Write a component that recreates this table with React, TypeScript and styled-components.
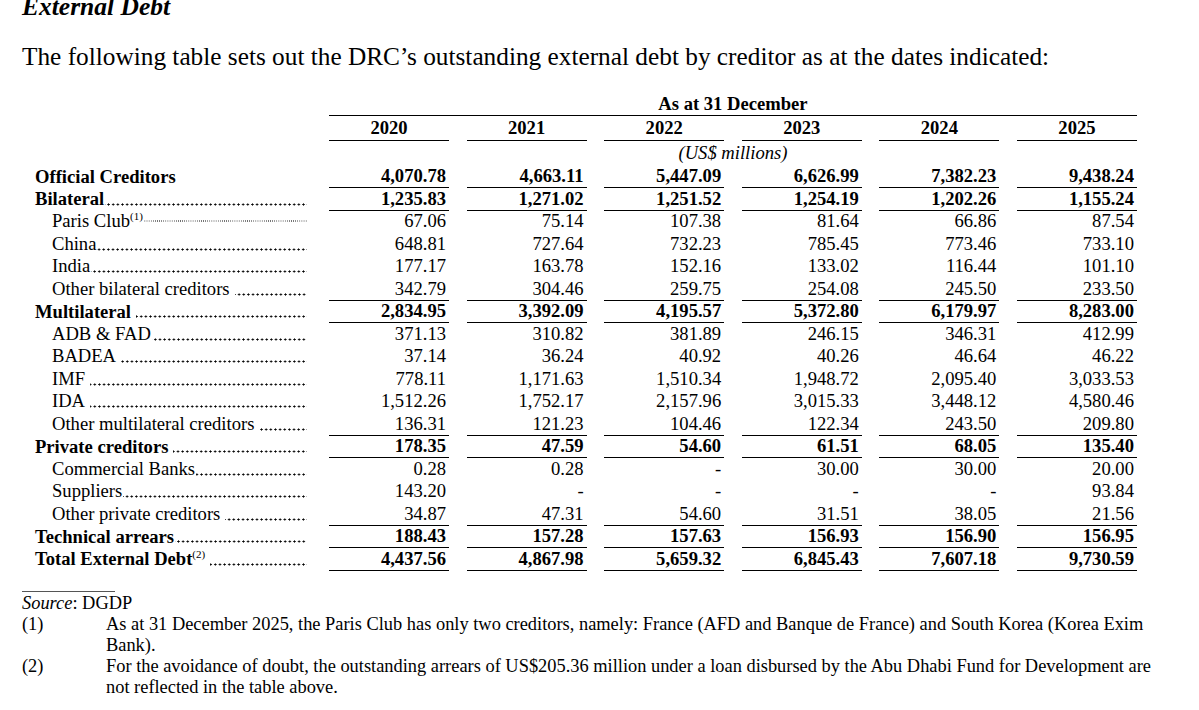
import React from 'react'
import styled, { createGlobalStyle } from 'styled-components'

const GlobalStyle = createGlobalStyle`
  html, body {
    margin: 0;
    padding: 0;
    background: #fff;
  }
  body {
    font-family: 'Liberation Serif', 'Times New Roman', serif;
    color: #000;
    overflow: hidden;
  }
`

type RowKind = 'top' | 'group' | 'item'

interface DebtRow {
  label: string
  kind: RowKind
  values: string[]
  note?: string
  ruled?: boolean
  gap?: boolean
  fineDots?: boolean
}

const YEARS = ['2020', '2021', '2022', '2023', '2024', '2025']

const ROWS: DebtRow[] = [
  { label: 'Official Creditors', kind: 'top', values: ['4,070.78', '4,663.11', '5,447.09', '6,626.99', '7,382.23', '9,438.24'], ruled: true },
  { label: 'Bilateral', kind: 'group', values: ['1,235.83', '1,271.02', '1,251.52', '1,254.19', '1,202.26', '1,155.24'], ruled: true },
  { label: 'Paris Club', kind: 'item', note: '(1)', fineDots: true, values: ['67.06', '75.14', '107.38', '81.64', '66.86', '87.54'] },
  { label: 'China', kind: 'item', values: ['648.81', '727.64', '732.23', '785.45', '773.46', '733.10'] },
  { label: 'India', kind: 'item', values: ['177.17', '163.78', '152.16', '133.02', '116.44', '101.10'] },
  { label: 'Other bilateral creditors', kind: 'item', gap: true, values: ['342.79', '304.46', '259.75', '254.08', '245.50', '233.50'], ruled: true },
  { label: 'Multilateral', kind: 'group', gap: true, values: ['2,834.95', '3,392.09', '4,195.57', '5,372.80', '6,179.97', '8,283.00'], ruled: true },
  { label: 'ADB & FAD', kind: 'item', values: ['371.13', '310.82', '381.89', '246.15', '346.31', '412.99'] },
  { label: 'BADEA', kind: 'item', gap: true, values: ['37.14', '36.24', '40.92', '40.26', '46.64', '46.22'] },
  { label: 'IMF', kind: 'item', gap: true, values: ['778.11', '1,171.63', '1,510.34', '1,948.72', '2,095.40', '3,033.53'] },
  { label: 'IDA', kind: 'item', gap: true, values: ['1,512.26', '1,752.17', '2,157.96', '3,015.33', '3,448.12', '4,580.46'] },
  { label: 'Other multilateral creditors', kind: 'item', gap: true, values: ['136.31', '121.23', '104.46', '122.34', '243.50', '209.80'], ruled: true },
  { label: 'Private creditors', kind: 'group', gap: true, values: ['178.35', '47.59', '54.60', '61.51', '68.05', '135.40'], ruled: true },
  { label: 'Commercial Banks', kind: 'item', values: ['0.28', '0.28', '-', '30.00', '30.00', '20.00'] },
  { label: 'Suppliers', kind: 'item', values: ['143.20', '-', '-', '-', '-', '93.84'] },
  { label: 'Other private creditors', kind: 'item', gap: true, values: ['34.87', '47.31', '54.60', '31.51', '38.05', '21.56'], ruled: true },
  { label: 'Technical arrears', kind: 'group', values: ['188.43', '157.28', '157.63', '156.93', '156.90', '156.95'], ruled: true },
  { label: 'Total External Debt', kind: 'group', note: '(2)', gap: true, values: ['4,437.56', '4,867.98', '5,659.32', '6,845.43', '7,607.18', '9,730.59'], ruled: true },
]

const Page = styled.main`
  padding: 0 0 0 22px;
  width: 1177px;
`

const Title = styled.h3`
  margin: -6px 0 0;
  font-size: 25.5px;
  line-height: 26px;
  font-weight: bold;
  font-style: italic;
`

const Intro = styled.p`
  margin: 22px 0 0;
  font-size: 25.3px;
  line-height: 28px;
`

const Table = styled.section`
  margin: 23px 0 0 13px;
  width: 1102px;
  font-size: 18.6px;
`

const Row = styled.div<{ $height?: number }>`
  display: grid;
  grid-template-columns: 276.4px repeat(6, 120px);
  column-gap: 17.6px;
  height: ${(p) => p.$height ?? 22.5}px;
`

const SpanCell = styled.div<{ $ruled?: boolean; $italic?: boolean }>`
  grid-column: 2 / 8;
  display: flex;
  align-items: center;
  justify-content: center;
  box-sizing: border-box;
  font-weight: ${(p) => (p.$italic ? 'normal' : 'bold')};
  font-style: ${(p) => (p.$italic ? 'italic' : 'normal')};
  border-bottom: ${(p) => (p.$ruled ? '1px solid #000' : 'none')};
`

const YearCell = styled.div`
  display: flex;
  align-items: center;
  justify-content: center;
  box-sizing: border-box;
  font-weight: bold;
  border-bottom: 1px solid #000;
  padding-top: 1px;
`

const LabelCell = styled.div<{ $kind: RowKind }>`
  display: flex;
  align-items: center;
  min-width: 0;
  padding-left: ${(p) => (p.$kind === 'item' ? '17px' : '0')};
  padding-right: 4.4px;
  white-space: nowrap;
`

const LabelText = styled.span<{ $bold: boolean }>`
  font-weight: ${(p) => (p.$bold ? 'bold' : 'normal')};
  flex-shrink: 0;
`

const Note = styled.sup`
  font-size: 11px;
  line-height: 0;
  vertical-align: 7px;
  font-weight: normal;
`

/* dot leader, drawn as a repeating dot pattern sitting on the baseline */
const Leader = styled.span<{ $gap?: boolean; $fine?: boolean }>`
  flex: 1;
  align-self: stretch;
  min-width: 0;
  margin-left: ${(p) => (p.$gap ? '5px' : '1px')};
  background-image: radial-gradient(
    circle,
    ${(p) => (p.$fine ? '#555 0.45px, transparent 0.8px' : '#000 0.85px, transparent 1.25px')}
  );
  background-size: ${(p) => (p.$fine ? '2.1px 2px' : '4.65px 3px')};
  background-repeat: repeat-x;
  background-position: ${(p) => (p.$fine ? 'right 0 top 10px' : 'right 1px top 15.2px')};
`

const ValueCell = styled.div<{ $bold: boolean; $ruled?: boolean }>`
  display: flex;
  align-items: center;
  justify-content: flex-end;
  box-sizing: border-box;
  padding-right: 3px;
  font-weight: ${(p) => (p.$bold ? 'bold' : 'normal')};
  border-bottom: ${(p) => (p.$ruled ? '1px solid #000' : 'none')};
`

const Notes = styled.footer`
  margin-top: 21px;
  font-size: 18.4px;
  line-height: 21px;
`

const Rule = styled.div`
  width: 93px;
  border-top: 1px solid #555;
`

const Source = styled.div`
  margin-top: 1px;
  em {
    font-style: italic;
  }
`

const NoteItem = styled.div`
  display: grid;
  grid-template-columns: 84px 1052px;
`

const DebtRowView: React.FC<{ row: DebtRow }> = ({ row }) => {
  const bold = row.kind !== 'item'
  return (
    <Row>
      <LabelCell $kind={row.kind}>
        <LabelText $bold={bold}>
          {row.label}
          {row.note && <Note>{row.note}</Note>}
        </LabelText>
        {row.kind !== 'top' && <Leader $gap={row.gap} $fine={row.fineDots} />}
      </LabelCell>
      {row.values.map((v, i) => (
        <ValueCell key={YEARS[i]} $bold={bold} $ruled={row.ruled}>
          {v}
        </ValueCell>
      ))}
    </Row>
  )
}

export default function App() {
  return (
    <Page>
      <GlobalStyle />
      <Title>External Debt</Title>
      <Intro>The following table sets out the DRC’s outstanding external debt by creditor as at the dates indicated:</Intro>
      <Table>
        <Row $height={22}>
          <div />
          <SpanCell $ruled>As at 31 December</SpanCell>
        </Row>
        <Row $height={26}>
          <div />
          {YEARS.map((y) => (
            <YearCell key={y}>{y}</YearCell>
          ))}
        </Row>
        <Row $height={24}>
          <div />
          <SpanCell $italic>(US$ millions)</SpanCell>
        </Row>
        {ROWS.map((r) => (
          <DebtRowView key={r.label} row={r} />
        ))}
      </Table>
      <Notes>
        <Rule />
        <Source>
          <em>Source</em>: DGDP
        </Source>
        <NoteItem>
          <span>(1)</span>
          <span>
            As at 31 December 2025, the Paris Club has only two creditors, namely: France (AFD and Banque de France) and South Korea (Korea Exim
            Bank).
          </span>
        </NoteItem>
        <NoteItem>
          <span>(2)</span>
          <span>
            For the avoidance of doubt, the outstanding arrears of US$205.36 million under a loan disbursed by the Abu Dhabi Fund for Development are
            not reflected in the table above.
          </span>
        </NoteItem>
      </Notes>
    </Page>
  )
}
